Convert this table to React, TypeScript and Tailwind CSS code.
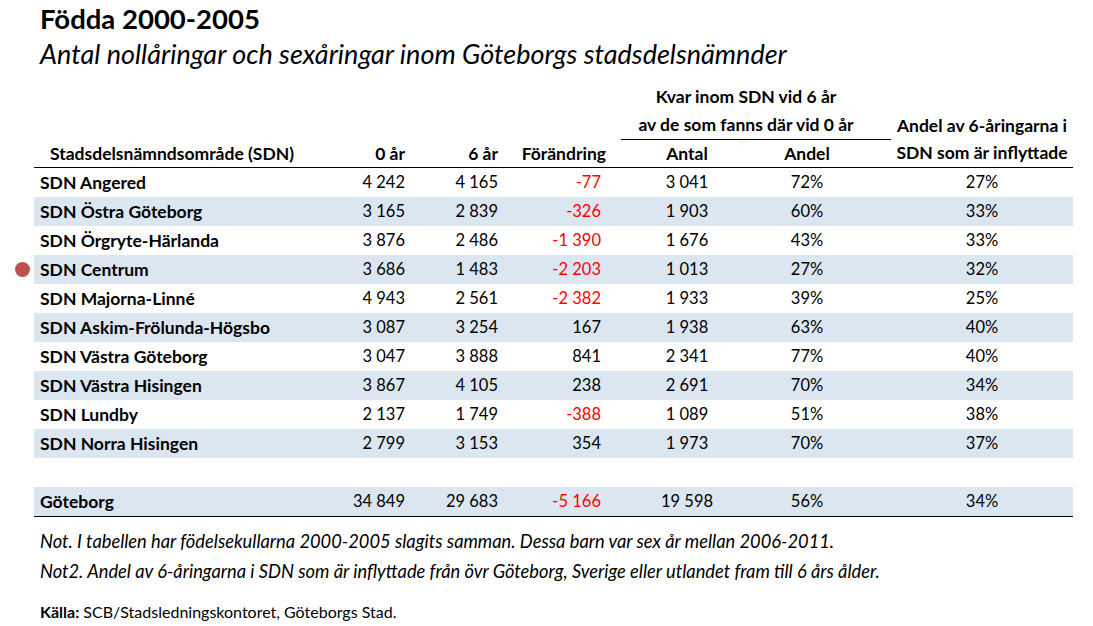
const rows = [
  { name: "SDN Angered", a: "4 242", b: "4 165", c: "-77", neg: true, d: "3 041", e: "72%", f: "27%" },
  { name: "SDN Östra Göteborg", a: "3 165", b: "2 839", c: "-326", neg: true, d: "1 903", e: "60%", f: "33%" },
  { name: "SDN Örgryte-Härlanda", a: "3 876", b: "2 486", c: "-1 390", neg: true, d: "1 676", e: "43%", f: "33%" },
  { name: "SDN Centrum", a: "3 686", b: "1 483", c: "-2 203", neg: true, d: "1 013", e: "27%", f: "32%", dot: true },
  { name: "SDN Majorna-Linné", a: "4 943", b: "2 561", c: "-2 382", neg: true, d: "1 933", e: "39%", f: "25%" },
  { name: "SDN Askim-Frölunda-Högsbo", a: "3 087", b: "3 254", c: "167", neg: false, d: "1 938", e: "63%", f: "40%" },
  { name: "SDN Västra Göteborg", a: "3 047", b: "3 888", c: "841", neg: false, d: "2 341", e: "77%", f: "40%" },
  { name: "SDN Västra Hisingen", a: "3 867", b: "4 105", c: "238", neg: false, d: "2 691", e: "70%", f: "34%" },
  { name: "SDN Lundby", a: "2 137", b: "1 749", c: "-388", neg: true, d: "1 089", e: "51%", f: "38%" },
  { name: "SDN Norra Hisingen", a: "2 799", b: "3 153", c: "354", neg: false, d: "1 973", e: "70%", f: "37%" },
];

type Row = (typeof rows)[number];

const cols = "grid grid-cols-[296px_80px_93px_118px_132px_118px_202px]";

function DataRow({ r, band }: { r: Row; band: boolean }) {
  return (
    <div className="relative">
      {r.dot && (
        <span className="absolute left-[-19px] top-[7px] size-[15px] rounded-full bg-[#c0504d]" />
      )}
      <div className={`${cols} h-[29px] items-center text-[16.5px] ${band ? "bg-[#dce6f1]" : ""}`}>
        <div className="pl-[6px] font-bold text-[17.5px]">{r.name}</div>
        <div className="text-right pr-[5px]">{r.a}</div>
        <div className="text-right pr-[5px]">{r.b}</div>
        <div className={`text-right pr-[20px] ${r.neg ? "text-[#ff0000]" : ""}`}>{r.c}</div>
        <div className="text-center">{r.d}</div>
        <div className="text-center pr-[10px]">{r.e}</div>
        <div className="text-center pl-[20px]">{r.f}</div>
      </div>
    </div>
  );
}

export default function App() {
  return (
    <div className="w-[1093px] h-[626px] bg-white text-black font-['Lato',sans-serif] text-[16px] leading-none">
      <div className="pl-[40px] pt-[5px]">
        <h1 className="text-[27.5px] font-bold leading-[28px]">Födda 2000-2005</h1>
        <h2 className="mt-[7px] text-[27px] italic leading-[28px]">
          Antal nollåringar och sexåringar inom Göteborgs stadsdelsnämnder
        </h2>
      </div>

      <div className="ml-[34px] w-[1039px] mt-[14px] text-[17.5px]">
        <div className={`${cols} grid-rows-[29px_29px_27px] font-bold border-b border-black`}>
          <div className="col-start-5 col-span-2 row-start-1 flex items-center justify-center">
            Kvar inom SDN vid 6 år
          </div>
          <div className="col-start-5 col-span-2 row-start-2 flex items-center justify-center border-b border-black mr-[-20px] pr-[20px]">
            av de som fanns där vid 0 år
          </div>
          <div className="col-start-7 row-start-2 row-span-2 flex flex-col items-center justify-end pl-[20px] pb-[5px] gap-[9px] leading-[18px]">
            <span>Andel av 6-åringarna i</span>
            <span>SDN som är inflyttade</span>
          </div>
          <div className="col-start-1 row-start-3 flex items-center pl-[16px]">
            Stadsdelsnämndsområde (SDN)
          </div>
          <div className="col-start-2 row-start-3 flex items-center justify-end pr-[5px]">0 år</div>
          <div className="col-start-3 row-start-3 flex items-center justify-end pr-[5px]">6 år</div>
          <div className="col-start-4 row-start-3 flex items-center justify-end pr-[15px]">Förändring</div>
          <div className="col-start-5 row-start-3 flex items-center justify-center">Antal</div>
          <div className="col-start-6 row-start-3 flex items-center justify-center pr-[10px]">Andel</div>
        </div>

        {rows.map((r, i) => (
          <DataRow key={r.name} r={r} band={i % 2 === 1} />
        ))}
        <div className="h-[29px]" />
        <div className="border-b border-black">
          <DataRow
            r={{ name: "Göteborg", a: "34 849", b: "29 683", c: "-5 166", neg: true, d: "19 598", e: "56%", f: "34%" }}
            band
          />
        </div>
      </div>

      <div className="pl-[40px] pt-[15px] italic text-[18.3px] flex flex-col gap-[12px] leading-[18px]">
        <p>Not. I tabellen har födelsekullarna 2000-2005 slagits samman. Dessa barn var sex år mellan 2006-2011.</p>
        <p>Not2. Andel av 6-åringarna i SDN som är inflyttade från övr Göteborg, Sverige eller utlandet fram till 6 års ålder.</p>
      </div>
      <p className="pl-[40px] mt-[24px] text-[16px] leading-[16px]">
        <span className="font-bold">Källa:</span> SCB/Stadsledningskontoret, Göteborgs Stad.
      </p>
    </div>
  );
}
